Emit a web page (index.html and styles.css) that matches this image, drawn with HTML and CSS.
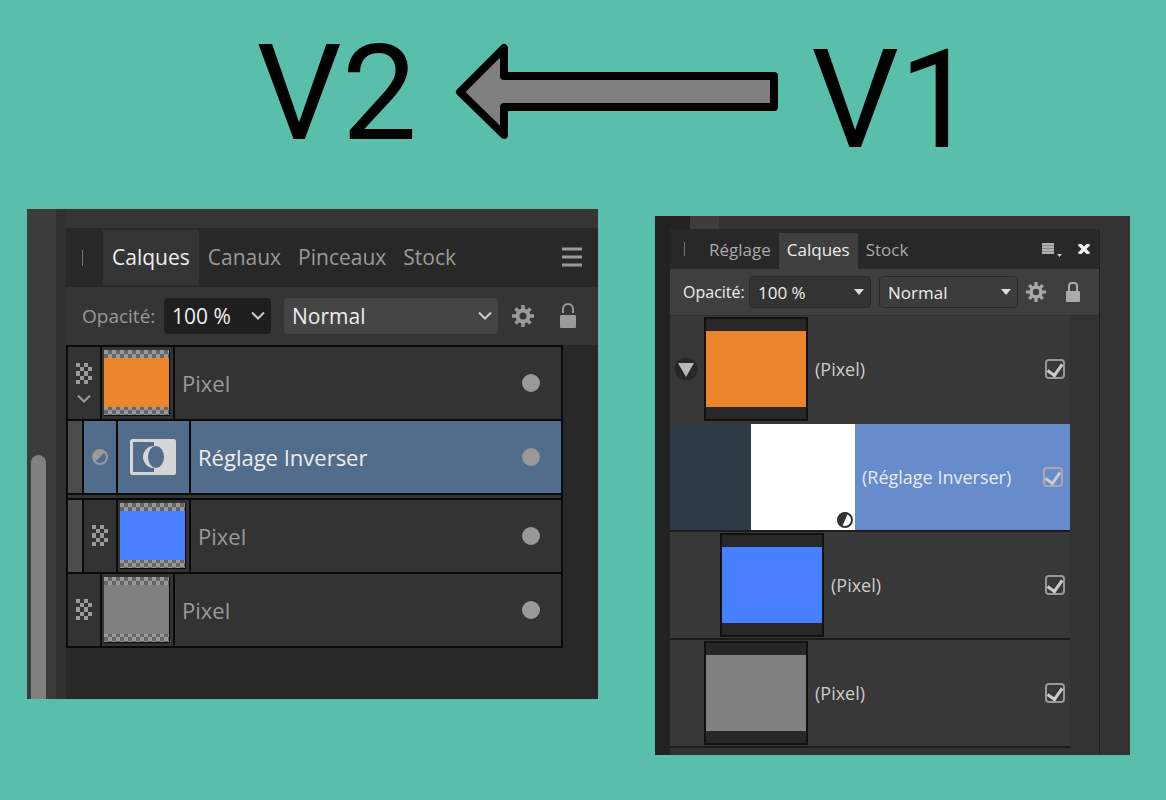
FILE: index.html
```html
<!DOCTYPE html>
<html lang="fr">
<head>
    <meta charset="UTF-8">
    <meta name="viewport" content="width=device-width, initial-scale=1.0">
    <title>Calques V1 / V2</title>
    <link rel="stylesheet" href="styles.css">
</head>
<body>
    <!-- shared icons -->
    <svg class="sprite" width="0" height="0" aria-hidden="true">
        <symbol id="checker" viewBox="0 0 18 22">
            <path fill="currentColor" d="M1 0h4v4h-4zM9 0h4v4h-4zM5 4h4v4h-4zM13 4h4v4h-4zM1 8h4v5h-4zM9 8h4v5h-4zM5 13h4v4h-4zM13 13h4v4h-4zM1 17h4v4h-4zM9 17h4v4h-4z"/>
        </symbol>
        <symbol id="chevron" viewBox="0 0 14 9">
            <path fill="none" stroke="currentColor" stroke-width="2" d="M1 1.500l6 6 6-6"/>
        </symbol>
        <symbol id="gear" viewBox="0 0 22 22">
            <circle cx="11" cy="11" r="5.500" fill="none" stroke="currentColor" stroke-width="4"/>
            <path stroke="currentColor" stroke-width="3.500" d="M11 0v4M11 18v4M0 11h4M18 11h4M3.500 3.500l2.500 2.500M16 16l2.500 2.500M18.500 3.500l-2.500 2.500M6 16l-2.500 2.500"/>
        </symbol>
    </svg>

    <header class="versions">
        <span class="version version-new">V2</span>
        <svg class="arrow" viewBox="0 0 324 98" aria-hidden="true">
            <path d="M5 49L49 5V33H319V64H49V92Z" fill="#808080" stroke="#000" stroke-width="8" stroke-linejoin="round"/>
        </svg>
        <span class="version version-old">V1</span>
    </header>

    <main class="compare">
        <section class="v2">
            <div class="v2-gutter"><div class="v2-scroll"></div></div>
            <div class="v2-panel">
                <div class="v2-strip"></div>
                <nav class="v2-tabs">
                    <span class="grip"></span>
                    <button class="active">Calques</button>
                    <button>Canaux</button>
                    <button>Pinceaux</button>
                    <button>Stock</button>
                    <button class="v2-menu" aria-label="Menu">
                        <svg width="20" height="20" viewBox="0 0 20 20"><path stroke="currentColor" stroke-width="3" d="M0 2h20M0 10h20M0 18h20"/></svg>
                    </button>
                </nav>
                <div class="v2-tools">
                    <label for="v2-opacity">Opacité:</label>
                    <div class="select opacity">
                        <select id="v2-opacity"><option>100 %</option></select>
                        <svg width="14" height="9"><use href="#chevron"/></svg>
                    </div>
                    <div class="select blend">
                        <select aria-label="Mode de fusion"><option>Normal</option></select>
                        <svg width="14" height="9"><use href="#chevron"/></svg>
                    </div>
                    <button class="tool" aria-label="Options"><svg width="22" height="22"><use href="#gear"/></svg></button>
                    <button class="tool" aria-label="Verrouiller">
                        <svg width="16" height="26" viewBox="0 0 16 26"><path fill="none" stroke="currentColor" stroke-width="2" d="M3 10V6a5 5 0 0 1 10 0v4"/><rect y="12" width="16" height="13" rx="1" fill="currentColor"/></svg>
                    </button>
                </div>
                <ul class="v2-layers">
                    <li>
                        <div class="kind">
                            <svg width="18" height="22"><use href="#checker"/></svg>
                            <svg width="14" height="9"><use href="#chevron"/></svg>
                        </div>
                        <div class="thumb-cell"><div class="thumb"><div class="fill orange"></div></div></div>
                        <label for="n1">Pixel</label>
                        <input type="checkbox" id="n1" checked>
                    </li>
                    <li class="child selected">
                        <div class="indent"></div>
                        <div class="kind">
                            <svg class="half" width="16" height="16" viewBox="0 0 16 16"><circle cx="8" cy="8" r="7" fill="none" stroke="currentColor" stroke-width="2"/><path fill="currentColor" d="M13 3A7 7 0 0 0 3 13z"/></svg>
                        </div>
                        <div class="thumb-cell">
                            <svg width="46" height="36" viewBox="0 0 46 36">
                                <rect x="1.500" y="1.500" width="43" height="33" rx="1" fill="none" stroke="#d6d6d6" stroke-width="3"/>
                                <path fill="#d6d6d6" d="M24 2h20v32H24z"/>
                                <path fill="#d6d6d6" d="M24 7a11 11 0 0 0 0 22z"/>
                                <ellipse cx="26" cy="18" rx="8" ry="11" fill="#526c8c"/>
                            </svg>
                        </div>
                        <label for="n2">Réglage Inverser</label>
                        <input type="checkbox" id="n2" checked>
                    </li>
                    <li class="child after-gap">
                        <div class="indent"></div>
                        <div class="kind"><svg width="18" height="22"><use href="#checker"/></svg></div>
                        <div class="thumb-cell"><div class="thumb"><div class="fill blue"></div></div></div>
                        <label for="n3">Pixel</label>
                        <input type="checkbox" id="n3" checked>
                    </li>
                    <li>
                        <div class="kind"><svg width="18" height="22"><use href="#checker"/></svg></div>
                        <div class="thumb-cell"><div class="thumb"><div class="fill gray"></div></div></div>
                        <label for="n4">Pixel</label>
                        <input type="checkbox" id="n4" checked>
                    </li>
                </ul>
            </div>
        </section>

        <section class="v1">
            <div class="v1-top"><span></span></div>
            <div class="v1-panel">
                <nav class="v1-tabs">
                    <span class="grip"></span>
                    <button>Réglage</button>
                    <button class="active">Calques</button>
                    <button>Stock</button>
                    <button class="v1-menu" aria-label="Menu">
                        <svg width="20" height="14" viewBox="0 0 20 14"><path fill="#888" d="M0 0h12v11H0z"/><path stroke="#bbb" stroke-width="1.500" d="M0 1h12M0 4h12M0 7h12M0 10h12"/><path fill="#ccc" d="M15 11h5l-2.500 3z"/></svg>
                    </button>
                    <button class="v1-close" aria-label="Fermer">
                        <svg width="12" height="10" viewBox="0 0 12 10"><path stroke="#eee" stroke-width="3.500" d="M1 0l10 10M11 0L1 10"/></svg>
                    </button>
                </nav>
                <div class="v1-tools">
                    <label for="v1-opacity">Opacité:</label>
                    <div class="select opacity">
                        <select id="v1-opacity"><option>100 %</option></select>
                        <svg width="10" height="6" viewBox="0 0 10 6"><path fill="#ddd" d="M0 0h10L5 6z"/></svg>
                    </div>
                    <div class="select blend">
                        <select aria-label="Mode de fusion"><option>Normal</option></select>
                        <svg width="10" height="6" viewBox="0 0 10 6"><path fill="#ddd" d="M0 0h10L5 6z"/></svg>
                    </div>
                    <button class="tool" aria-label="Options"><svg width="20" height="20"><use href="#gear"/></svg></button>
                    <button class="tool" aria-label="Verrouiller">
                        <svg width="14" height="20" viewBox="0 0 14 20"><path fill="none" stroke="currentColor" stroke-width="2" d="M3 9V4a3 3 0 0 1 3-3h2a3 3 0 0 1 3 3v5"/><rect y="9" width="14" height="11" rx="1" fill="currentColor"/></svg>
                    </button>
                </div>
                <ul class="v1-layers">
                    <li>
                        <div class="lead">
                            <svg width="24" height="24" viewBox="0 0 24 24"><circle cx="12" cy="12" r="11.500" fill="#272727"/><path fill="#b8b8b8" d="M4 6h16L12 20z"/></svg>
                        </div>
                        <div class="thumb"><div class="fill orange"></div></div>
                        <label for="o1">(Pixel)</label>
                        <input type="checkbox" id="o1" checked>
                    </li>
                    <li class="selected">
                        <div class="lead"></div>
                        <div class="thumb">
                            <svg width="16" height="16" viewBox="0 0 16 16"><circle cx="8" cy="8" r="7" fill="#fff" stroke="#333" stroke-width="2"/><path fill="#333" d="M11 1A7.500 7.500 0 1 0 5 15z"/></svg>
                        </div>
                        <label for="o2">(Réglage Inverser)</label>
                        <input type="checkbox" id="o2" checked>
                    </li>
                    <li class="child">
                        <div class="lead"></div>
                        <div class="thumb"><div class="fill blue"></div></div>
                        <label for="o3">(Pixel)</label>
                        <input type="checkbox" id="o3" checked>
                    </li>
                    <li>
                        <div class="lead"></div>
                        <div class="thumb"><div class="fill gray"></div></div>
                        <label for="o4">(Pixel)</label>
                        <input type="checkbox" id="o4" checked>
                    </li>
                </ul>
            </div>
        </section>
    </main>
</body>
</html>
```
FILE: styles.css
```css
* {
    box-sizing: border-box;
}
body {
    margin: 0;
    background: #59bfaa;
    font-family: "Open Sans", "Noto Sans", sans-serif;
}
.sprite {
    position: absolute;
}
svg {
    display: block;
}
button {
    padding: 0;
    border: none;
    background: none;
    color: inherit;
    font: inherit;
    cursor: pointer;
}
ul {
    list-style: none;
    margin: 0;
    padding: 0;
}

/* heading */
.versions {
    display: flex;
    align-items: flex-start;
    padding: 27px 0 40px 22%;
}
.version {
    font-family: Roboto, Arial, sans-serif;
    line-height: 1;
    color: #000;
}
.version-new {
    font-size: 134px;
}
.version-old {
    font-size: 138px;
    margin-top: 4px;
}
.arrow {
    width: 324px;
    height: 98px;
    margin: 16px 32px 0 38px;
}

.compare {
    display: grid;
    grid-template-columns: 571fr 475fr;
    gap: 57px;
    align-items: start;
    padding: 0 36px 40px 27px;
}

/* shared controls */
.select {
    position: relative;
}
.select select {
    appearance: none;
    width: 100%;
    height: 100%;
    margin: 0;
    border: none;
    background: none;
    color: #eee;
    font: inherit;
}
.select svg {
    position: absolute;
    right: 6px;
    top: 50%;
    margin-top: -5px;
    color: #ccc;
    pointer-events: none;
}
.grip {
    width: 1px;
    height: 16px;
    background: #777;
}
.orange {
    background: #eb852b;
}
.blue {
    background: #477fff;
}
.gray {
    background: #808080;
}

/* V2 panel */
.v2 {
    display: flex;
    background: #313131;
    font-size: 21px;
    color: #9a9a9a;
}
.v2-gutter {
    width: 29px;
    margin-right: 10px;
    padding: 246px 10px 0 4px;
    background: #3c3c3c;
}
.v2-scroll {
    height: 100%;
    border-radius: 8px 8px 0 0;
    background: #808080;
}
.v2-panel {
    flex: 1;
    min-width: 0;
    background: #282828;
    padding-bottom: 51px;
}
.v2-strip {
    height: 19px;
    background: #353535;
}
.v2-tabs {
    display: flex;
    align-items: center;
    height: 59px;
    padding: 0 16px;
}
.v2-tabs button {
    height: 55px;
    margin-right: 1px;
    padding: 0 8px 2px;
}
.v2-tabs .grip {
    margin-right: 20px;
}
.v2-tabs .active {
    padding: 0 9px 2px;
    background: #353535;
    color: #eee;
}
.v2-tabs .v2-menu {
    margin: 0 0 0 auto;
    padding: 0 0 2px;
}
.v2-tools {
    display: flex;
    align-items: center;
    height: 58px;
    padding: 0 22px 0 16px;
    background: #353535;
}
.v2-tools label {
    width: 82px;
    font-size: 19px;
}
.v2-tools .select {
    height: 36px;
    border-radius: 4px;
    background: #1f1f1f;
}
.v2-tools select {
    padding: 0 8px;
}
.v2-tools .opacity {
    width: 107px;
    margin-right: 13px;
}
.v2-tools .blend {
    flex: 1;
    background: #444;
}
.v2-tools .tool {
    margin-left: 14px;
}
.v2-tools .tool + .tool {
    margin-left: 26px;
}
.v2-layers {
    margin-right: 35px;
    border: solid #0a0a0a;
    border-width: 2px 2px 0;
    background: #333;
    font-size: 22px;
}
.v2-layers li {
    display: flex;
    align-items: center;
    height: 74px;
    padding-right: 21px;
    border-bottom: 2px solid #0a0a0a;
}
.v2-layers .indent {
    align-self: stretch;
    width: 16px;
    border-right: 2px solid #0a0a0a;
    background: #4c4c4c;
}
.v2-layers .kind {
    display: flex;
    flex-direction: column;
    align-items: center;
    justify-content: center;
    gap: 9px;
    align-self: stretch;
    width: 34px;
    border-right: 2px solid #0a0a0a;
}
.v2-layers .thumb-cell {
    display: flex;
    align-items: center;
    justify-content: center;
    align-self: stretch;
    width: 73px;
    padding-right: 2px;
    border-right: 2px solid #0a0a0a;
}
.v2-layers .thumb {
    width: 66px;
    height: 66px;
    padding: 8px 0;
    border: solid #0a0a0a;
    border-width: 0 1px 1px 0;
    background: repeating-conic-gradient(#666 0 25%, #999 0 50%) 0 0 / 8px 8px;
}
.v2-layers .fill {
    height: 100%;
}
.v2-layers label {
    flex: 1;
    padding-left: 7px;
}
.v2-layers input {
    appearance: none;
    width: 18px;
    height: 18px;
    margin: 0;
    border: 2px solid #999;
    border-radius: 50%;
}
.v2-layers input:checked {
    background: #999;
}
.v2-layers .selected {
    background: #526c8c;
    color: #eee;
}
.v2-layers .half {
    color: #999;
}
.v2-layers .after-gap {
    height: 76px;
    margin-top: 3px;
    border-top: 2px solid #0a0a0a;
}

/* V1 panel */
.v1 {
    margin-top: 7px;
    padding: 0 30px 0 15px;
    background: linear-gradient(to right, #222 15px, #333 15px);
    font-size: 17px;
    color: #aaa;
}
.v1-top {
    height: 13px;
    background: linear-gradient(to right, #222 20px, #333 20px);
}
.v1-top span {
    display: block;
    width: 29px;
    height: 13px;
    margin-left: 20px;
    background: #3d3d3d;
}
.v1-panel {
    padding-bottom: 7px;
    border-right: 1px solid #222;
}
.v1-tabs {
    display: flex;
    align-items: center;
    height: 40px;
    padding: 0 9px 0 14px;
    background: #282828;
}
.v1-tabs button {
    align-self: flex-end;
    height: 36px;
    padding: 0 8px 4px;
}
.v1-tabs .grip {
    height: 14px;
    margin-right: 16px;
}
.v1-tabs .active {
    background: #3f3f3f;
    color: #eee;
}
.v1-tabs .v1-menu {
    margin-left: auto;
    padding: 0 16px 2px 0;
}
.v1-tabs .v1-close {
    padding: 0 0 4px;
}
.v1-tools {
    display: flex;
    align-items: center;
    height: 47px;
    padding: 0 19px 0 13px;
    border-bottom: 1px solid #2e2e2e;
    background: #3f3f3f;
    color: #eee;
}
.v1-tools label {
    width: 66px;
    font-size: 16px;
}
.v1-tools .select {
    width: 122px;
    height: 32px;
    margin-right: 8px;
    border: 1px solid #282828;
    border-radius: 4px;
    background: #333;
}
.v1-tools .select svg {
    margin-top: -3px;
}
.v1-tools select {
    padding: 0 8px;
}
.v1-tools .blend {
    flex: 1;
    background: #3c3c3c;
}
.v1-tools .tool {
    color: #aaa;
}
.v1-tools .tool + .tool {
    margin-left: 20px;
}
.v1-layers {
    margin-right: 29px;
    font-size: 18px;
}
.v1-layers li {
    display: flex;
    align-items: center;
    height: 108px;
    padding-right: 5px;
    border-bottom: 2px solid #1c1c1c;
    background: #383838;
    color: #ccc;
}
.v1-layers li:first-child {
    border-bottom-color: #383838;
}
.v1-layers .lead {
    width: 34px;
    padding-left: 4px;
}
.v1-layers .child .lead {
    width: 50px;
}
.v1-layers .thumb {
    width: 104px;
    height: 104px;
    padding: 12px 0;
    border: 2px solid #111;
    background: #272727;
}
.v1-layers .fill {
    height: 100%;
}
.v1-layers label {
    flex: 1;
    padding-left: 7px;
}
.v1-layers input {
    appearance: none;
    display: grid;
    place-items: center;
    width: 20px;
    height: 20px;
    margin: 0;
    padding-bottom: 3px;
    border: 2px solid #999;
    border-radius: 4px;
}
.v1-layers input:checked::before {
    content: "";
    width: 7px;
    height: 12px;
    border: solid #ccc;
    border-width: 0 3px 3px 0;
    transform: rotate(35deg);
}
.v1-layers .selected {
    padding-right: 7px;
    background: #688bcb;
    color: #e4ebf7;
}
.v1-layers .selected .lead {
    align-self: stretch;
    width: 81px;
    background: #303a44;
}
.v1-layers .selected .thumb {
    display: flex;
    align-items: flex-end;
    justify-content: flex-end;
    align-self: stretch;
    height: auto;
    padding: 2px;
    border: none;
    background: #fff;
}
.v1-layers .selected input {
    border-color: #aaa;
}
```
